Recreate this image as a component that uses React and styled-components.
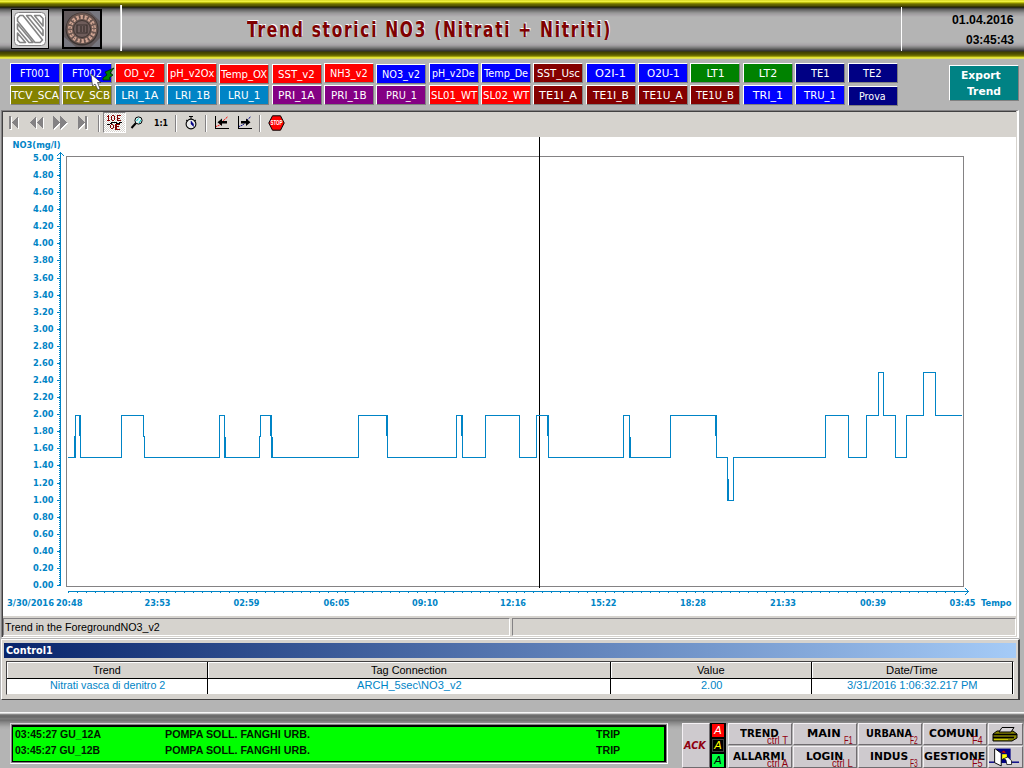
import React, { useLayoutEffect, useRef, useState } from "react";
import styled, { createGlobalStyle } from "styled-components";

const Global = createGlobalStyle`
  * { box-sizing: border-box; }
  body { margin: 0; background: #b4b4b4; overflow: hidden; }
  #root { font-family: "Liberation Sans", Arial, sans-serif; font-size: 11px; color: #000; }
`;

/* ---------- text squeezed or stretched to a fixed width ---------- */
const FitBox = styled.span`
  display: inline-block;
  flex: none;
  width: ${(p) => p.$w}px;
  white-space: nowrap;
  text-align: left;
`;
const FitText = styled.span`
  display: inline-block;
  transform-origin: 0 50%;
`;
function Fit({ w, children }) {
  const ref = useRef(null);
  const [k, setK] = useState(1);
  useLayoutEffect(() => {
    setK(w / ref.current.offsetWidth);
  }, [w, children]);
  return (
    <FitBox $w={w}>
      <FitText ref={ref} style={{ transform: `scaleX(${k})` }}>{children}</FitText>
    </FitBox>
  );
}

/* ---------- page ---------- */
const Screen = styled.div`
  width: 1024px;
  height: 768px;
  display: flex;
  flex-direction: column;
  background: #b4b4b4;
  position: relative;
  overflow: hidden;
`;

/* ---------- header ---------- */
const Header = styled.header`
  height: 59px;
  flex: none;
  display: flex;
  padding: 7px 0 8px;
  background: linear-gradient(
    #c4c000 0, #ffff58 1px, #e0e020 2px, #a0a000 3px, #6c6c00 4px, #505000 6px, #202000 7px,
    #303030 8px, #585858 9px, #787878 11px, #989898 13px, #a8a4a8 15px, #b4b4b4 17px,
    #b4b4b4 42px, #a8a4a8 45px, #888 47px, #606060 49px, #303030 51px,
    #404000 52px, #505000 54px, #787800 56px, #c8c818 57px, #ffff58 58px, #c0c060 59px
  );
`;
const Logos = styled.div`
  width: 122px;
  padding: 4px 0 0 11px;
  display: flex;
  gap: 13px;
  border-right: 1px solid #fff;
  box-shadow: inset -1px 0 #d8d8d8;
  margin-top: -2px;
`;
const LogoSvg = styled.svg`
  display: block;
  width: ${(p) => p.$w}px;
  height: 40px;
`;
const TitleArea = styled.div`
  flex: 1;
  padding: 1px 0 0 125px;
`;
const Title = styled.h1`
  margin: 0;
  font: bold 20.5px/44px "DejaVu Sans", sans-serif;
  letter-spacing: 2.2px;
  color: #800000;
  text-shadow: 1px -1px 0 #fff;
`;
const Clock = styled.div`
  width: 123px;
  border-left: 1px solid #fff;
  padding: 3px 10px 0 0;
  font: bold 12.5px/20px "Liberation Sans", sans-serif;
  display: flex;
  flex-direction: column;
  align-items: flex-end;
`;

/* ---------- tag buttons ---------- */
const TagBar = styled.div`
  height: 51px;
  flex: none;
  display: flex;
  justify-content: space-between;
  padding: 4px 5px 0 10px;
`;
const TagGrid = styled.div`
  display: grid;
  grid-template-columns: repeat(17, 50px);
  grid-auto-rows: 20px;
  gap: 2px 2.35px;
`;
const Tag = styled.button`
  position: relative;
  top: ${(p) => (p.$low ? 1 : 0)}px;
  border: 1px solid;
  border-color: #fff #808080 #808080 #fff;
  border-width: 1px 1px 1px 1px;
  background: ${(p) => p.$bg};
  color: #fff;
  padding: 1px 0 0;
  display: flex;
  align-items: center;
  justify-content: center;
  font: 11px/16px "DejaVu Sans", sans-serif;
`;
const ExportButton = styled(Tag)`
  width: 70px;
  height: 36px;
  margin-top: 2px;
  padding: 2px 6px 0 0;
  flex-direction: column;
  font: bold 11px/16px "DejaVu Sans", sans-serif;
  span + span { margin-left: 5px; }
`;
const Pointer = styled.svg`
  position: absolute;
  left: 90px;
  top: 66px;
  width: 27px;
  height: 27px;
`;

/* ---------- trend window ---------- */
const TrendWindow = styled.section`
  margin: 0 5px 0 1px;
  height: 528px;
  flex: none;
  display: flex;
  flex-direction: column;
  border-top: 1px solid #848284;
  border-left: 1px solid #848284;
  border-right: 2px solid #fff;
  border-bottom: 1px solid #fff;
  background: #d6d3ce;
`;
const TrendInner = styled.div`
  flex: 1;
  display: flex;
  flex-direction: column;
  border-top: 1px solid #424142;
  border-left: 1px solid #424142;
  margin-right: 1px;
`;
const Toolbar = styled.div`
  height: 25px;
  flex: none;
  display: flex;
  align-items: flex-start;
`;
const ToolCell = styled.div`
  width: 23px;
  height: 21px;
  display: flex;
  align-items: center;
  justify-content: center;
  border: 1px solid;
  border-color: ${(p) => (p.$down ? "#848284 #fff #fff #848284" : "transparent")};
  background: ${(p) =>
    p.$down ? "repeating-conic-gradient(#fff 0 25%, #d6d3ce 0 50%) 0 0 / 2px 2px" : "none"};
  font: bold 9.5px/20px "DejaVu Sans", sans-serif;
  svg { display: block; flex: none; }
`;
const Steps = styled.div`
  display: flex;
  margin: 0 1px 0 -1px;
`;
const Divider = styled.div`
  width: 2px;
  height: 17px;
  margin: 3px ${(p) => p.$r}px 0 3px;
  background: #848284;
  border-right: 1px solid #fff;
`;
const ChartSvg = styled.svg`
  display: block;
  flex: none;
  width: 1013px;
  height: 479px;
  background: #fff;
  text { font: bold 8.8px "DejaVu Sans", sans-serif; fill: #0084c6; }
`;
const StatusBar = styled.div`
  flex: 1;
  display: flex;
  gap: 2px;
  padding: 2px 0 1px;
`;
const StatusCell = styled.div`
  flex: ${(p) => p.$flex};
  border: 1px solid;
  border-color: #848284 #fff #fff #848284;
  padding-left: 1px;
  font-size: 11.5px;
  line-height: 16px;
`;

/* ---------- control window ---------- */
const ControlWindow = styled.section`
  height: 61px;
  flex: none;
  margin: 1px 4px 0 1px;
  border: 1px solid;
  border-color: #fff #424142 #424142 #fff;
  border-right-width: 2px;
  background: #d6d3ce;
  padding: 3px 2px 0 2px;
`;
const ControlTitle = styled.div`
  height: 15px;
  background: linear-gradient(90deg, #08246b, #a5cbf7);
  color: #fff;
  padding-left: 2px;
  font: bold 11px/16px "DejaVu Sans Condensed", "DejaVu Sans", sans-serif;
`;
const Table = styled.div`
  margin: 3px 2px 0 2px;
  height: 34px;
  display: grid;
  grid-template-columns: 201px 403px 201px 1fr;
  grid-template-rows: 17px 15px;
  background: #fff;
  border: 1px solid;
  border-color: #424142 #fff #d6d3ce #424142;
`;
const Cell = styled.div`
  display: flex;
  align-items: center;
  justify-content: center;
  border-right: 1px solid #000;
  font-size: 11.5px;
  line-height: ${(p) => (p.$head ? 14 : 13)}px;
  ${(p) =>
    p.$head
      ? "background:#d6d3ce; border-bottom:1px solid #000; box-shadow: inset 1px 1px #fff;"
      : "color:#0084c6; padding-bottom: 2px;"}
`;

/* ---------- footer ---------- */
const Footer = styled.footer`
  margin-top: 12px;
  height: 57px;
  flex: none;
  display: flex;
  padding: 11px 0 0 10px;
  background: linear-gradient(
    #f0f0f0 0, #fff 1px, #a0a0a0 2px, #707070 3px, #686868 5px, #808080 7px, #6c6c6c 8px,
    #848484 10px, #949494 12px, #acacac 15px, #b4b4b4 18px
  );
`;
const AlarmBox = styled.div`
  width: 658px;
  height: 41px;
  border: 1px solid;
  border-color: #d8d4d8 #fff #fff #d8d4d8;
  background: #848284;
  padding: 1px;
`;
const AlarmList = styled.div`
  height: 37px;
  border: 2px solid #000;
  border-left-width: 1px;
  border-bottom-width: 1px;
  background: #00ff00;
  padding: 0 2px;
`;
const AlarmRow = styled.div`
  display: grid;
  grid-template-columns: 150px 431px 1fr;
  height: 16px;
  font: bold 11.5px/15px "Liberation Sans", sans-serif;
  color: #001800;
`;
const NavPanel = styled.nav`
  margin-left: 14px;
  display: flex;
  align-items: flex-start;
`;
const NavGrid = styled.div`
  margin-left: 2px;
  display: grid;
  grid-template-columns: repeat(4, 65px) 36px;
  grid-auto-rows: 23px;
`;
const NavButton = styled.button`
  width: ${(p) => p.$w || 64}px;
  height: ${(p) => p.$h || 22}px;
  position: relative;
  padding: 0 2px 0 0;
  display: flex;
  align-items: center;
  justify-content: center;
  background: #cecace;
  border: 1px solid;
  border-color: #f4f0f4 #706c70 #706c70 #f4f0f4;
  color: ${(p) => p.$color || "#000"};
  font: bold 11px/18px "DejaVu Sans", sans-serif;
  font-style: ${(p) => (p.$italic ? "italic" : "normal")};
`;
const Hotkey = styled.span`
  position: absolute;
  right: 3px;
  bottom: -2px;
  font: 10px/11px "Liberation Sans", sans-serif;
  color: #900010;
`;
const Lamps = styled.div`
  width: 16px;
  height: 45px;
  display: grid;
  grid-template-rows: repeat(3, 15px);
  background: #000;
`;
const Lamp = styled.div`
  margin: 1px 2px;
  background: ${(p) => p.$bg};
  color: ${(p) => p.$fg};
  border: 1px solid ${(p) => p.$edge};
  font: italic 11px/11px "DejaVu Sans", sans-serif;
  text-align: center;
`;

/* ---------- data ---------- */
const BLUE = "#0000ff", RED = "#ff0000", MAROON = "#840000", GREEN = "#008200";
const NAVY = "#000084", OLIVE = "#848200", SKY = "#0084c6", PURPLE = "#840084";
const TAGS = [
  ["FT001", 30, BLUE], ["FT002", 30, BLUE], ["OD_v2", 31, RED], ["pH_v2Ox", 44, RED],
  ["Temp_OX", 46, RED, 1], ["SST_v2", 37, RED, 1], ["NH3_v2", 38, RED], ["NO3_v2", 38, BLUE, 1],
  ["pH_v2De", 43, BLUE], ["Temp_De", 44, BLUE], ["SST_Usc", 43, MAROON], ["O2I-1", 31, BLUE],
  ["O2U-1", 33, BLUE], ["LT1", 18, GREEN], ["LT2", 18, GREEN], ["TE1", 19, NAVY], ["TE2", 19, NAVY],
  ["TCV_SCA", 47, OLIVE], ["TCV_SCB", 46, OLIVE], ["LRI_1A", 37, SKY], ["LRI_1B", 35, SKY],
  ["LRU_1", 32, SKY], ["PRI_1A", 37, PURPLE], ["PRI_1B", 36, PURPLE], ["PRU_1", 31, PURPLE],
  ["SL01_WT", 46, RED], ["SL02_WT", 46, RED], ["TE1I_A", 38, MAROON], ["TE1I_B", 36, MAROON],
  ["TE1U_A", 40, MAROON], ["TE1U_B", 38, MAROON], ["TRI_1", 30, BLUE], ["TRU_1", 32, BLUE],
  ["Prova", 27, NAVY, 1],
];
const TIMES = [
  ["23:53", 157.5], ["02:59", 246.5], ["06:05", 336.5], ["09:10", 425], ["12:16", 513],
  ["15:22", 603.5], ["18:28", 693], ["21:33", 783], ["00:39", 873], ["03:45", 962.5],
];
const NAV = [
  ["TREND", 39, "ctrl T", 21], ["MAIN", 34, "F1", 9], ["URBANA", 46, "F2", 8], ["COMUNI", 50, "F4", 11],
  ["ALLARMI", 52, "ctrl A", 21], ["LOGIN", 37, "ctrl L", 21], ["INDUS", 38, "F3", 8], ["GESTIONE", 61, "F5", 11],
];
const TREND_PATH =
  "M68 457.5H75.5V415.5H80.5V457.5H121.5V415.5H143.5V436.5H144.5V457.5H219.5V415.5H224.5V457.5" +
  "H259.5V436.5H260.5V415.5H271.5V457.5H358.5V415.5H387.5V457.5H456.5V415.5H462.5V457.5" +
  "H485.5V415.5H519.5V457.5H536.5V415.5H548.5V457.5H623.5V415.5H629.5V457.5H670.5V415.5H716.5V457.5" +
  "H727.5V500.5H733.5V457.5H825.5V415.5H848.5V457.5H866.5V415.5H878.5V372.5H883.5V415.5" +
  "H895.5V457.5H906.5V415.5H923.5V372.5H935.5V415.5H962";
const TREND_EDGES =
  "M74.5 436V457M79.5 416V436M225.5 437V457M270.5 416V436M272.5 437V457M386.5 416V436" +
  "M461.5 416V436M547.5 416V436M630.5 437V457M715.5 416V436M728.5 479V500";

function AxisText({ x, y, w, children }) {
  return <text x={x} y={y} textLength={w} lengthAdjust="spacingAndGlyphs">{children}</text>;
}

function Chart() {
  const ticksX = Array.from({ length: 100 }, (_, i) => Math.round(68 + i * 8.95));
  return (
    <ChartSvg viewBox="3 137 1013 479">
      <g fill="none" shapeRendering="crispEdges">
        <rect x="66.5" y="156.5" width="897" height="430" stroke="#848284" />
        <path d="M539.5 137V588" stroke="#000" />
        <g stroke="#0084c6">
          <path d={TREND_PATH} />
          <path d={TREND_EDGES} />
          <path d="M60.5 152V586" />
          <path d="M59.5 160V585" strokeDasharray="1 1" />
          <path d="M59 153.5H62M58 154.5H59M62 154.5H63M57 155.5H58M63 155.5H64" />
          <path d="M68 591.5H969M965 588.5H966M966 589.5H967M967 590.5H968M967 592.5H968M966 593.5H967M965 594.5H966" />
          <path d={ticksX.map((x) => `M${x}.5 592V593`).join("")} />
          {Array.from({ length: 26 }, (_, i) => (
            <path key={i} d={`M57 ${Math.round(158 + i * 17.08)}.5H60`} />
          ))}
        </g>
      </g>
      <AxisText x={12.5} y={148} w={48}>NO3(mg/l)</AxisText>
      {Array.from({ length: 26 }, (_, i) => (
        <AxisText key={i} x={33} y={Math.round(158 + i * 17.08) + 3} w={20.5}>
          {(5 - i * 0.2).toFixed(2)}
        </AxisText>
      ))}
      <AxisText x={7} y={606} w={47}>3/30/2016</AxisText>
      <AxisText x={56} y={606} w={26.5}>20:48</AxisText>
      {TIMES.map(([t, c]) => (
        <AxisText key={t} x={c - 13} y={606} w={26}>{t}</AxisText>
      ))}
      <AxisText x={981} y={606} w={30.5}>Tempo</AxisText>
    </ChartSvg>
  );
}

/* ---------- drawings ---------- */
const StripeLogo = () => (
  <LogoSvg $w={38} viewBox="0 0 38 40">
    <rect x=".5" y=".5" width="37" height="39" fill="#c8c8c8" stroke="#000" />
    <rect x="3.5" y="3.5" width="31" height="33" rx="4" fill="#fff" stroke="#848284" />
    <g fill="none" stroke="#848484" strokeWidth="1.6" strokeLinejoin="round">
      <path d="M9 6.5L6.5 9V12L24 33.5H29L31.5 31L12 6.5Z" />
      <path d="M15.500 6.500H20L32 21V26.500Z" />
      <path d="M23.500 6.500H29L32 9.500V17Z" />
      <path d="M6.500 15V20L18 33.500H22Z" />
      <path d="M6.500 24V31L9 33.500H14.500Z" />
    </g>
  </LogoSvg>
);
const CoverLogo = () => (
  <LogoSvg $w={40} viewBox="0 0 40 40">
    <rect width="40" height="40" fill="#000" />
    <rect x="2" y="2" width="36" height="36" fill="#625a5c" />
    <path d="M2 38V28L14 38M38 38V29L29 38M27 2H38V12" fill="#77777f" />
    <circle cx="20" cy="20" r="16.500" fill="#3b3432" />
    <circle cx="20" cy="19.500" r="15.500" fill="#6a5650" />
    <circle cx="20" cy="20" r="12" fill="none" stroke="#cfa492" strokeWidth="4" strokeDasharray="2.600 1.600" />
    <circle cx="20" cy="20" r="12" fill="none" stroke="#5a4641" strokeWidth="1" strokeDasharray="1.500 2.300" />
    <circle cx="20" cy="20" r="8.500" fill="#6e5c5a" stroke="#3e3431" />
    <path d="M15 16H25V24H15ZM19 17V23M22 17V23" fill="none" stroke="#3a302e" strokeWidth="1.200" />
  </LogoSvg>
);
function NavArrow({ w, d }) {
  return (
    <svg width={w} height="15" viewBox={`0 0 ${w} 15`} shapeRendering="crispEdges">
      <path d={d} fill="#fff" transform="translate(1 1)" />
      <path d={d} fill="#848284" />
    </svg>
  );
}
const FormatIcon = () => (
  <svg width="17" height="17" viewBox="0 0 17 17" shapeRendering="crispEdges" fill="none">
    <path d="M2.5 1V6M1 2.500H3M1 6.500H4M5.500 2V6M6 1.500H8M8.500 2V6M6 6.500H8M11.500 1V7M11 1.500H15M11 4.500H14M11 6.500H15M4.500 11V14M5 10.500H7M7.500 11V14M5 14.500H7M9.500 10V16M9 10.500H14M9 12.500H13M9 15.500H14M10.500 10V16" stroke="#840000" />
    <path d="M1 10.500H4M4 9.500H6M5 8.500H11M10 9.500H14M13 8.500H16" stroke="#000" />
  </svg>
);
const LensIcon = () => (
  <svg width="15" height="15" viewBox="0 0 15 15">
    <path d="M6 8L1.5 13" stroke="#000" strokeWidth="2" />
    <circle cx="8.500" cy="5.500" r="3.600" fill="#d8f4f4" stroke="#000" />
    <path d="M6.500 6L8.500 3.500M9 8L11 5" stroke="#00b8b8" />
  </svg>
);
const WatchIcon = () => (
  <svg width="14" height="15" viewBox="0 0 14 15">
    <circle cx="7" cy="9" r="4.900" fill="#e8e8e8" stroke="#000" strokeWidth="1.100" />
    <path d="M5 1.500H9M7 1.500V4M2 5L3.500 6M12 5L10.500 6" stroke="#000" />
    <path d="M7 6V9L9.500 11.500V9Z" fill="#000084" stroke="#000084" strokeWidth=".5" />
  </svg>
);
const GraphIcon = ({ right }) => (
  <svg width="16" height="15" viewBox="0 0 16 15">
    <path d="M1.500 1V14M1 13.500H15" stroke="#000" shapeRendering="crispEdges" fill="none" />
    <path d="M2 11.500L6 10L10 5L14 1.500" stroke={right ? "#000084" : "#ff0000"} strokeDasharray="1.500 .7" fill="none" />
    <path d={right ? "M4 6H9V3.500L13.500 7.200L9 11V8.500H4Z" : "M13 6H8V3.500L3.500 7.200L8 11V8.500H13Z"} fill="#000" />
  </svg>
);
const StopSvg = styled.svg`
  text { font: bold 6.4px "Liberation Sans", sans-serif; fill: #fff; }
`;
const StopIcon = () => (
  <StopSvg width="17" height="16" viewBox="0 0 17 16">
    <path d="M4.500 .8H12.500L16.200 8L12.500 15.200H4.500L.8 8Z" fill="#ff0000" stroke="#000" />
    <text x="2.500" y="10.300" textLength="12" lengthAdjust="spacingAndGlyphs">STOP</text>
  </StopSvg>
);
const PrinterIcon = () => (
  <svg width="28" height="16" viewBox="0 0 28 16">
    <path d="M2 8L6 5H22L26 8V12L21 15H2Z" fill="#848200" stroke="#000" />
    <path d="M8 6L11 1.500H23L20 6Z" fill="#d8d4d8" stroke="#000" />
    <path d="M2 8.500H26M2 11.500H23" stroke="#000" strokeWidth="1.500" />
    <path d="M3 13.500H17" stroke="#c8c800" />
  </svg>
);
const DoorIcon = () => (
  <svg width="33" height="19" viewBox="0 0 33 19">
    <path d="M0 14.500H32" stroke="#000084" strokeWidth="1.500" />
    <path d="M7 0H23V15H7Z" fill="#000084" />
    <path d="M6 .5H7L13 5V18.500L6 15Z" fill="#fff" stroke="#000" />
    <path d="M14 6H19V11H14Z" fill="#ffff00" />
    <path d="M13 4L16 2L18 5Z" fill="#c80000" />
    <path d="M15 11L20 9L24 13V17H19L18 12Z" fill="#fff" stroke="#000" strokeWidth=".8" />
  </svg>
);

export default function App() {
  return (
    <>
      <Global />
      <Screen>
        <Header>
          <Logos><StripeLogo /><CoverLogo /></Logos>
          <TitleArea><Title><Fit w={365}>Trend storici NO3 (Nitrati + Nitriti)</Fit></Title></TitleArea>
          <Clock><Fit w={62}>01.04.2016</Fit><Fit w={48}>03:45:43</Fit></Clock>
        </Header>

        <TagBar>
          <TagGrid>
            {TAGS.map(([t, w, bg, low]) => (
              <Tag key={t} $bg={bg} $low={low}><Fit w={w}>{t}</Fit></Tag>
            ))}
          </TagGrid>
          <ExportButton $bg="#008284"><Fit w={40}>Export</Fit><Fit w={34}>Trend</Fit></ExportButton>
        </TagBar>

        <TrendWindow>
          <TrendInner>
            <Toolbar>
              <Steps>
                <ToolCell><NavArrow w={12} d="M1 1H3V14H1ZM10 1V14L3.5 7.5Z" /></ToolCell>
                <ToolCell><NavArrow w={16} d="M7 1V14L.5 7.5ZM14 1V14L7.5 7.5Z" /></ToolCell>
                <ToolCell><NavArrow w={16} d="M1 1V14L7.5 7.5ZM8 1V14L14.5 7.5Z" /></ToolCell>
                <ToolCell><NavArrow w={12} d="M1 1V14L7.5 7.5ZM8 1H10V14H8Z" /></ToolCell>
              </Steps>
              <Divider $r={3} />
              <ToolCell $down><FormatIcon /></ToolCell>
              <ToolCell><LensIcon /></ToolCell>
              <ToolCell><Fit w={14}>1:1</Fit></ToolCell>
              <Divider $r={2} />
              <ToolCell><WatchIcon /></ToolCell>
              <Divider $r={3} />
              <ToolCell><GraphIcon /></ToolCell>
              <ToolCell><GraphIcon right /></ToolCell>
              <Divider $r={4} />
              <ToolCell><StopIcon /></ToolCell>
            </Toolbar>
            <Chart />
            <StatusBar>
              <StatusCell $flex="0 0 507px"><Fit w={155}>Trend in the ForegroundNO3_v2</Fit></StatusCell>
              <StatusCell $flex="1" />
            </StatusBar>
          </TrendInner>
        </TrendWindow>

        <ControlWindow>
          <ControlTitle><Fit w={47}>Control1</Fit></ControlTitle>
          <Table>
            <Cell $head><Fit w={28}>Trend</Fit></Cell>
            <Cell $head><Fit w={76}>Tag Connection</Fit></Cell>
            <Cell $head><Fit w={28}>Value</Fit></Cell>
            <Cell $head><Fit w={52}>Date/Time</Fit></Cell>
            <Cell><Fit w={115}>Nitrati vasca di denitro 2</Fit></Cell>
            <Cell><Fit w={105}>ARCH_5sec\NO3_v2</Fit></Cell>
            <Cell><Fit w={21}>2.00</Fit></Cell>
            <Cell><Fit w={131}>3/31/2016 1:06:32.217 PM</Fit></Cell>
          </Table>
        </ControlWindow>

        <Footer>
          <AlarmBox>
            <AlarmList>
              {[["03:45:27 GU_12A", 86], ["03:45:27 GU_12B", 85]].map(([t, w]) => (
                <AlarmRow key={t}>
                  <Fit w={w}>{t}</Fit>
                  <Fit w={145}>POMPA SOLL. FANGHI URB.</Fit>
                  <Fit w={24}>TRIP</Fit>
                </AlarmRow>
              ))}
            </AlarmList>
          </AlarmBox>
          <NavPanel>
            <NavButton $w={28} $h={45} $color="#900010" $italic><Fit w={22}>ACK</Fit></NavButton>
            <Lamps>
              <Lamp $bg="#ff0000" $fg="#fff" $edge="#ff0000">A</Lamp>
              <Lamp $bg="#000" $fg="#ffff00" $edge="#404040">A</Lamp>
              <Lamp $bg="#00ff40" $fg="#000" $edge="#00ff40">A</Lamp>
            </Lamps>
            <NavGrid>
              {NAV.slice(0, 4).map(([t, w, k, kw]) => (
                <NavButton key={t}><Fit w={w}>{t}</Fit><Hotkey><Fit w={kw}>{k}</Fit></Hotkey></NavButton>
              ))}
              <NavButton $w={35}><PrinterIcon /></NavButton>
              {NAV.slice(4).map(([t, w, k, kw]) => (
                <NavButton key={t}><Fit w={w}>{t}</Fit><Hotkey><Fit w={kw}>{k}</Fit></Hotkey></NavButton>
              ))}
              <NavButton $w={35}><DoorIcon /></NavButton>
            </NavGrid>
          </NavPanel>
        </Footer>

        <Pointer viewBox="0 0 27 27">
          <path d="M24 2L15 6L17 9L13 12V14H20V13L19 12L23 9L20 7Z" fill="#008200" stroke="#002800" strokeWidth=".8" />
          <path d="M1 8L11 16.5H7.5L10 23L8 24L5 18L2.5 20Z" fill="#fff" stroke="#303030" strokeWidth=".7" />
        </Pointer>
      </Screen>
    </>
  );
}
